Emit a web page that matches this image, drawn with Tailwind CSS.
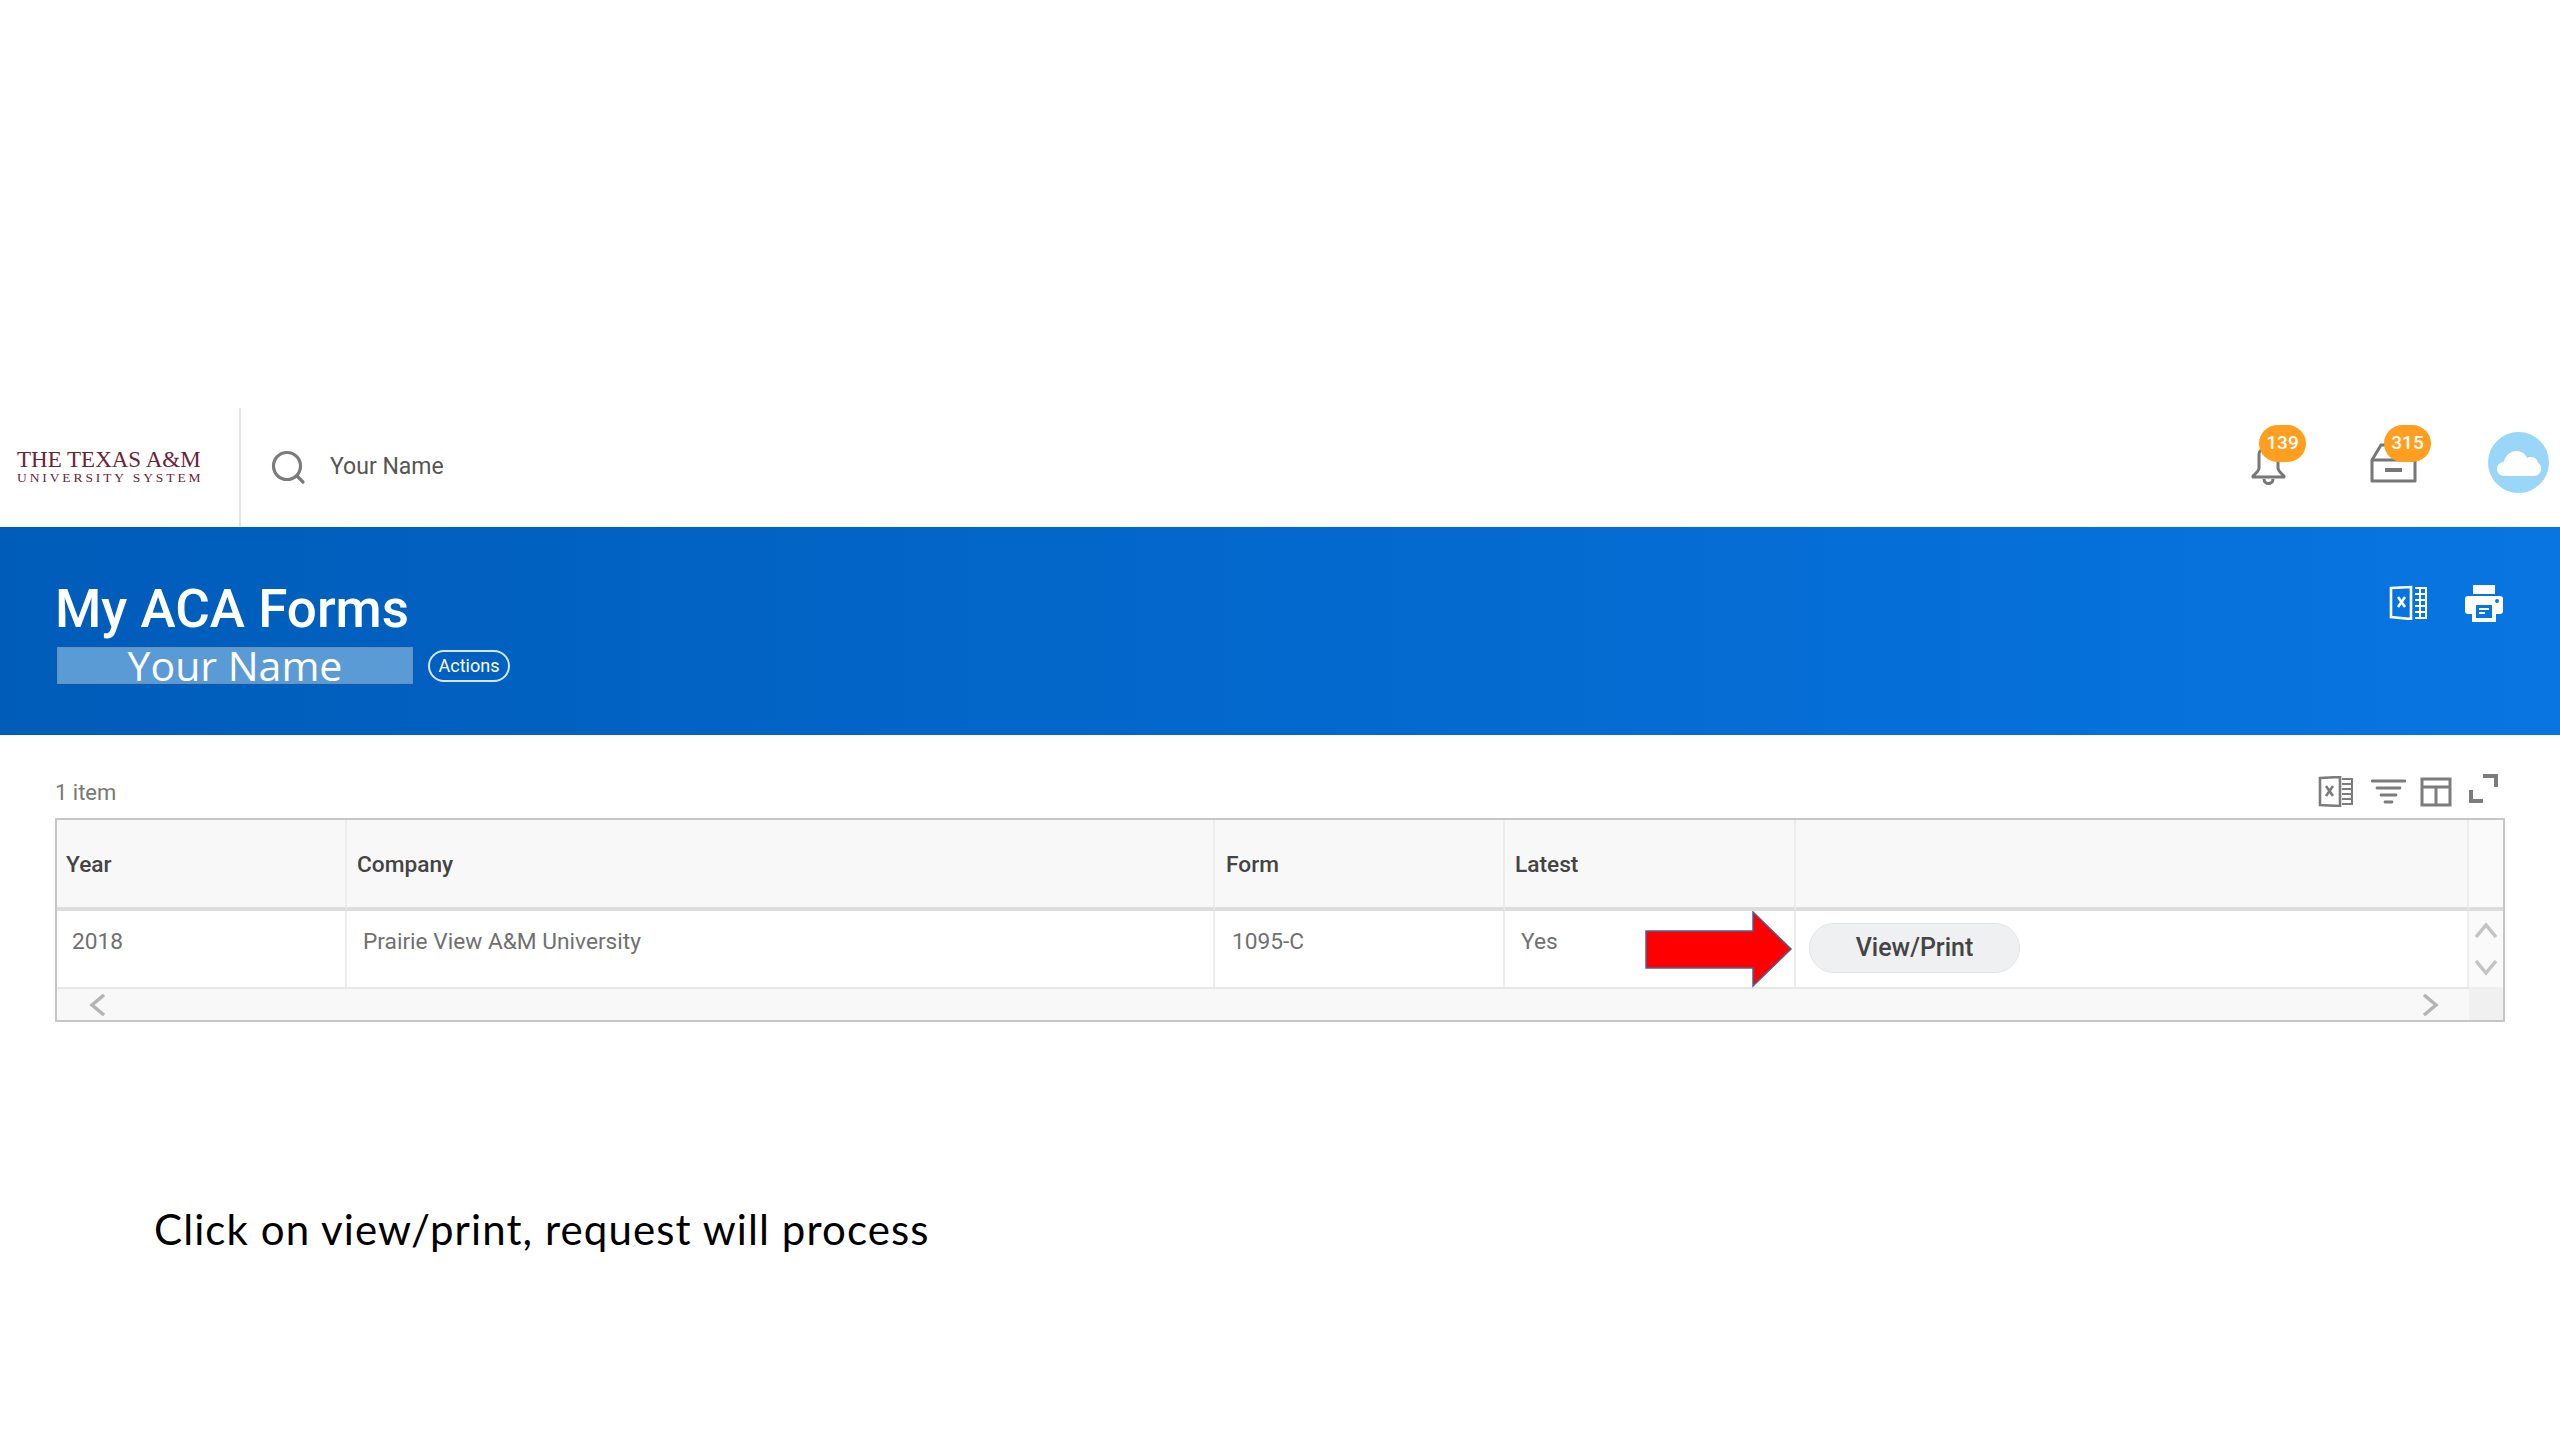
<!DOCTYPE html>
<html lang="en">
<head>
  <meta charset="UTF-8" />
  <title>My ACA Forms</title>
  <script src="https://cdn.jsdelivr.net/npm/@tailwindcss/browser@4"></script>
</head>
<body class="bg-white h-[1440px] overflow-hidden font-['Roboto',sans-serif] pt-[408px]">
  <!-- Top bar -->
  <header class="h-[119px] flex items-stretch">
    <div class="w-[241px] border-r-2 border-[#e4e4e4] pl-[17px] pt-[40px] font-['Liberation_Serif',serif] text-[#6b2237] shrink-0">
      <div class="text-[23px] leading-[23px] whitespace-nowrap">THE TEXAS A&amp;M</div>
      <div class="text-[13.5px] leading-[14px] tracking-[2.9px] whitespace-nowrap">UNIVERSITY SYSTEM</div>
    </div>
    <div class="flex items-center pl-[30px] flex-1">
      <svg class="w-[35px] h-[35px] text-[#7b7b7b]" viewBox="0 0 35 35" fill="none" stroke="currentColor" stroke-width="3.2" stroke-linecap="round"><circle cx="16" cy="16" r="13.5"/><path d="M26 26l6 6"/></svg>
      <span class="ml-[24px] text-[23px] text-[#555]">Your Name</span>
    </div>
    <div class="flex items-start relative w-[320px] shrink-0">
      <!-- bell -->
      <svg class="absolute left-[10px] top-[38px] w-[37px] h-[40px] text-[#777]" viewBox="0 0 37 40" fill="none" stroke="currentColor" stroke-width="3" stroke-linejoin="round"><path d="M9 8c0-3 3-6 9-6s10 3 10 8v12c0 3 3 5 6 8v1H3v-1c3-3 6-5 6-8z"/><path d="M14 33c0 6 9 6 9 0"/></svg>
      <span class="absolute left-[19px] top-[17px] w-[47px] h-[37px] rounded-full bg-[#ff9e1f] text-white text-[19px] font-medium flex items-center justify-center">139</span>
      <!-- inbox -->
      <svg class="absolute left-[130px] top-[35px] w-[47px] h-[40px] text-[#777]" viewBox="0 0 47 40" fill="none" stroke="currentColor" stroke-width="3" stroke-linejoin="round"><path d="M2 17v21h43V17z"/><path d="M2 17l9-15h25l9 15"/><path d="M2 17h43" stroke-width="2"/><path d="M15 27h17" stroke-width="4"/></svg>
      <span class="absolute left-[144px] top-[17px] w-[47px] h-[37px] rounded-full bg-[#ff9e1f] text-white text-[19px] font-medium flex items-center justify-center">315</span>
      <!-- avatar -->
      <div class="absolute left-[248px] top-[24px] w-[61px] h-[61px] rounded-full bg-[#99d6f7] flex items-center justify-center">
        <svg class="w-[44px] h-[26px]" viewBox="0 0 44 26" fill="#fff"><path d="M8 26C3 26 0 23 0 19c0-4 3-7 7-7 1-6 6-11 12-11 5 0 9 2 11 7 1-1 3-1 4-1 4 0 7 3 7 6 2 1 3 3 3 6 0 4-3 7-7 7z"/></svg>
      </div>
    </div>
  </header>

  <!-- Title band -->
  <section class="h-[208px] bg-gradient-to-r from-[#005cb9] to-[#0875e1] flex justify-between text-white">
    <div class="pl-[55px] pt-[52px]">
      <h1 class="text-[53px] leading-[60px] font-medium whitespace-nowrap">My ACA Forms</h1>
      <div class="flex items-center mt-[8px]">
        <div class="ml-[2px] w-[356px] h-[37px] bg-[#5b9bd5] border border-[#6f8fb0] flex items-center justify-center font-['Open_Sans',sans-serif] text-[41px] leading-[37px]">Your Name</div>
        <span class="ml-[15px] w-[82px] h-[32px] rounded-full border-2 border-[#d5e8fb] text-[18px] flex items-center justify-center">Actions</span>
      </div>
    </div>
    <div class="flex items-start gap-[37px] pt-[58px] pr-[57px]">
      <svg class="w-[39px] h-[35px]" viewBox="0 0 39 35" fill="none" stroke="#fff" stroke-width="2.6"><path d="M2 3l20-1v32L2 32z"/><path d="M9 12l7 10M16 12l-7 10"/><path d="M26 3h11v30H26M26 9h11M26 15h11M26 21h11M26 27h11M31 3v30" stroke-width="2"/></svg>
      <svg class="w-[38px] h-[37px]" viewBox="0 0 38 37" fill="#fff"><path d="M8 0h22v9H8z"/><path fill-rule="evenodd" d="M3 11h32a3 3 0 0 1 3 3v12a3 3 0 0 1-3 3h-4v8H7v-8H3a3 3 0 0 1-3-3V14a3 3 0 0 1 3-3zm8 9v13h16V20zm21-6a2 2 0 1 0 0 4 2 2 0 0 0 0-4z"/><path d="M14 23h10v2H14zM14 27h6v2h-6z"/></svg>
    </div>
  </section>

  <!-- Grid -->
  <main class="px-[55px] pt-[39px]">
    <div class="flex items-end justify-between h-[44px] text-[#777]">
      <span class="text-[22px] leading-[38px] self-start">1 item</span>
      <div class="flex items-start text-[#7c7c7c] pr-[7px] h-[44px]">
        <svg class="w-[35px] h-[31px] mt-[2px]" viewBox="0 0 35 31" fill="none" stroke="currentColor" stroke-width="2.6"><path d="M2 2l20-1v29L2 29z"/><path d="M8 10l7 10M15 10l-7 10"/><path d="M24 3h10v25H24M24 8h10M24 13h10M24 18h10M24 23h10" stroke-width="2"/></svg>
        <svg class="w-[35px] h-[25px] ml-[18px] mt-[5px]" viewBox="0 0 35 25" fill="none" stroke="currentColor" stroke-width="2.8" stroke-linecap="round"><path d="M1 2h33M6 9h23M10 16h15M14 23h7"/></svg>
        <svg class="w-[32px] h-[30px] ml-[14px] mt-[3px]" viewBox="0 0 32 30" fill="none" stroke="currentColor" stroke-width="3"><path d="M2 2h28v26H2zM2 10h28M16 10v18"/></svg>
        <svg class="w-[29px] h-[29px] ml-[17px]" viewBox="0 0 29 29" fill="none" stroke="currentColor" stroke-width="4"><path d="M14 2h13v11M2 16v11h12"/></svg>
      </div>
    </div>
    <div class="relative border-2 border-[#c6c6c6] grid grid-cols-[290px_868px_290px_291px_673px_1fr] grid-rows-[91px_76px_33px] text-[22.7px]">
      <div class="bg-[#f8f8f8] border-b-4 border-r-2 border-b-[#dcdcdc] border-r-[#ececec] pl-[9px] pt-[3px] flex items-center font-medium text-[#444]">Year</div>
      <div class="bg-[#f8f8f8] border-b-4 border-r-2 border-b-[#dcdcdc] border-r-[#ececec] pl-[10px] pt-[3px] flex items-center font-medium text-[#444]">Company</div>
      <div class="bg-[#f8f8f8] border-b-4 border-r-2 border-b-[#dcdcdc] border-r-[#ececec] pl-[11px] pt-[3px] flex items-center font-medium text-[#444]">Form</div>
      <div class="bg-[#f8f8f8] border-b-4 border-r-2 border-b-[#dcdcdc] border-r-[#ececec] pl-[10px] pt-[3px] flex items-center font-medium text-[#444]">Latest</div>
      <div class="bg-[#f8f8f8] border-b-4 border-r-2 border-b-[#dcdcdc] border-r-[#ececec]"></div>
      <div class="bg-[#fafafa] border-b-4 border-b-[#dcdcdc]"></div>

      <div class="border-r-2 border-[#ececec] pl-[15px] pt-[14px] text-[#707070]">2018</div>
      <div class="border-r-2 border-[#ececec] pl-[16px] pt-[14px] text-[#707070]">Prairie View A&amp;M University</div>
      <div class="border-r-2 border-[#ececec] pl-[17px] pt-[14px] text-[#707070]">1095-C</div>
      <div class="border-r-2 border-[#ececec] pl-[16px] pt-[14px] text-[#707070]">Yes</div>
      <div class="border-r-2 border-[#ececec] pl-[13px] pt-[12px]">
        <button class="w-[211px] h-[50px] rounded-full bg-[#eef0f1] border border-[#e2e5e6] font-medium text-[#444] text-[25px]">View/Print</button>
      </div>
      <div class="bg-[#fafafa] flex flex-col items-center gap-[22px] pt-[11px] text-[#c4c4c4]">
        <svg class="w-[22px] h-[16px]" viewBox="0 0 22 16" fill="none" stroke="currentColor" stroke-width="3.5"><path d="M1 15L11 3l10 12"/></svg>
        <svg class="w-[22px] h-[16px]" viewBox="0 0 22 16" fill="none" stroke="currentColor" stroke-width="3.5"><path d="M1 1l10 12L21 1"/></svg>
      </div>

      <div class="col-span-5 bg-[#f8f8f8] border-t-2 border-[#e6e6e6] flex items-center justify-between pl-[32px] pr-[30px] text-[#b5b5b5]">
        <svg class="w-[17px] h-[22px]" viewBox="0 0 17 22" fill="none" stroke="currentColor" stroke-width="3.5"><path d="M15 1L3 11l12 10"/></svg>
        <svg class="w-[17px] h-[22px]" viewBox="0 0 17 22" fill="none" stroke="currentColor" stroke-width="3.5"><path d="M2 1l12 10L2 21"/></svg>
      </div>
      <div class="bg-[#f0f0f0]"></div>

      <!-- callout arrow -->
      <svg class="absolute left-[1588px] top-[91px] w-[148px] h-[77px]" viewBox="0 0 148 77" fill="#ff0000" stroke="#4a6296" stroke-width="1.5"><path d="M1 20h107V1l38 37-38 37V57H1z"/></svg>
    </div>
    <p class="ml-[99px] mt-[181px] font-['Lato',sans-serif] text-[42px] tracking-[1.1px] leading-[52px] text-black whitespace-nowrap">Click on view/print, request will process</p>
  </main>
</body>
</html>
